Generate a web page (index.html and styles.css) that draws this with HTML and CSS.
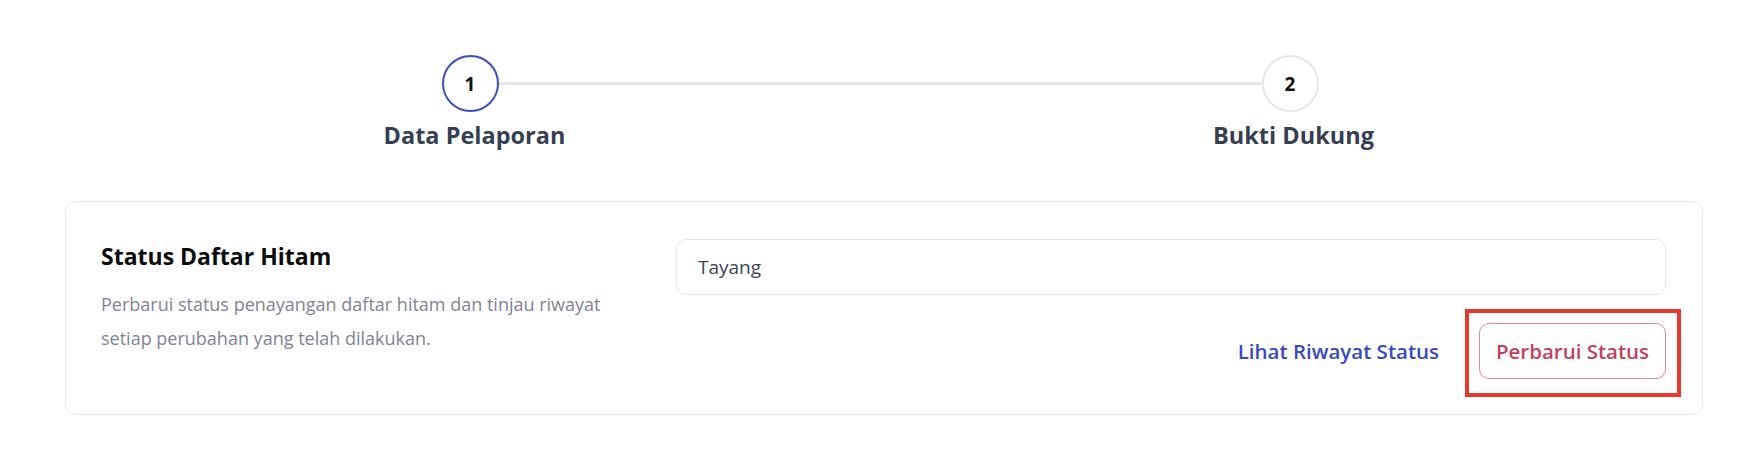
FILE: index.html
```html
<!DOCTYPE html>
<html lang="id">
<head>
<meta charset="utf-8">
<title>Status Daftar Hitam</title>
<link rel="stylesheet" href="styles.css">
</head>
<body>
<main class="page">
  <div class="stepper">
    <div class="track">
      <span class="step-dot is-active">1</span>
      <span class="track-line"></span>
      <span class="step-dot">2</span>
    </div>
    <div class="step-labels">
      <span class="step-label">Data Pelaporan</span>
      <span class="step-label">Bukti Dukung</span>
    </div>
  </div>

  <section class="card">
    <div class="card-info">
      <h2 class="card-title">Status Daftar Hitam</h2>
      <p class="card-desc">Perbarui status penayangan daftar hitam dan tinjau riwayat setiap perubahan yang telah dilakukan.</p>
    </div>
    <div class="card-form">
      <div class="field">Tayang</div>
      <div class="actions">
        <a class="link" href="#">Lihat Riwayat Status</a>
        <span class="highlight">
          <button class="btn-outline" type="button">Perbarui Status</button>
        </span>
      </div>
    </div>
  </section>
</main>
</body>
</html>
```

FILE: styles.css
```css
* { box-sizing: border-box; }

html, body {
  margin: 0;
  padding: 0;
  background: #ffffff;
}

body {
  font-family: "Open Sans", "Noto Sans", sans-serif;
  color: #111827;
}

.page {
  padding-top: 55px;
}

/* Stepper */
.stepper {
  width: 877px;
  margin: 0 auto;
}

.track {
  display: flex;
  align-items: center;
}

.step-dot {
  width: 57px;
  height: 57px;
  border-radius: 50%;
  border: 2px solid #e5e7eb;
  display: flex;
  align-items: center;
  justify-content: center;
  font-size: 19px;
  font-weight: 700;
  color: #111111;
  background: #ffffff;
  flex: none;
}

.step-dot.is-active {
  border-color: #3b4fc8;
}

.track-line {
  flex: 1;
  height: 3px;
  background: #e5e7eb;
}

.step-labels {
  display: flex;
  justify-content: space-between;
  margin: 8px -85px 0 -77px;
}

.step-label {
  width: 220px;
  text-align: center;
  font-size: 23.5px;
  line-height: 30px;
  font-weight: 700;
  color: #363f52;
}

/* Card */
.card {
  margin: 51px 57px 0 65px;
  border: 1px solid #e5e7eb;
  border-radius: 10px;
  padding: 37px 36px 35px 35px;
  display: grid;
  grid-template-columns: 520px 1fr;
  column-gap: 55px;
}

.card-title {
  margin: 2px 0 0;
  font-size: 23px;
  line-height: 30px;
  font-weight: 700;
  color: #0b0b0b;
}

.card-desc {
  margin: 16px 0 0;
  font-size: 18px;
  line-height: 34px;
  color: #7d8494;
}

.field {
  height: 56px;
  border: 1px solid #e5e7eb;
  border-radius: 10px;
  padding: 0 21px;
  display: flex;
  align-items: center;
  font-size: 19px;
  color: #3b4354;
}

.actions {
  margin-top: 28px;
  display: flex;
  justify-content: flex-end;
  align-items: center;
  gap: 40px;
}

.link {
  font-size: 20.5px;
  font-weight: 600;
  color: #3649c4;
  text-decoration: none;
}

.highlight {
  position: relative;
  display: flex;
}

.highlight::after {
  content: "";
  position: absolute;
  top: -14px;
  left: -14px;
  right: -15px;
  bottom: -18px;
  border: 4px solid #e8382c;
  pointer-events: none;
}

.btn-outline {
  height: 56px;
  width: 187px;
  padding: 0;
  border: 1px solid #dd8a9b;
  border-radius: 10px;
  background: #ffffff;
  font-family: inherit;
  font-size: 20.5px;
  font-weight: 600;
  color: #c43e5e;
}
```
